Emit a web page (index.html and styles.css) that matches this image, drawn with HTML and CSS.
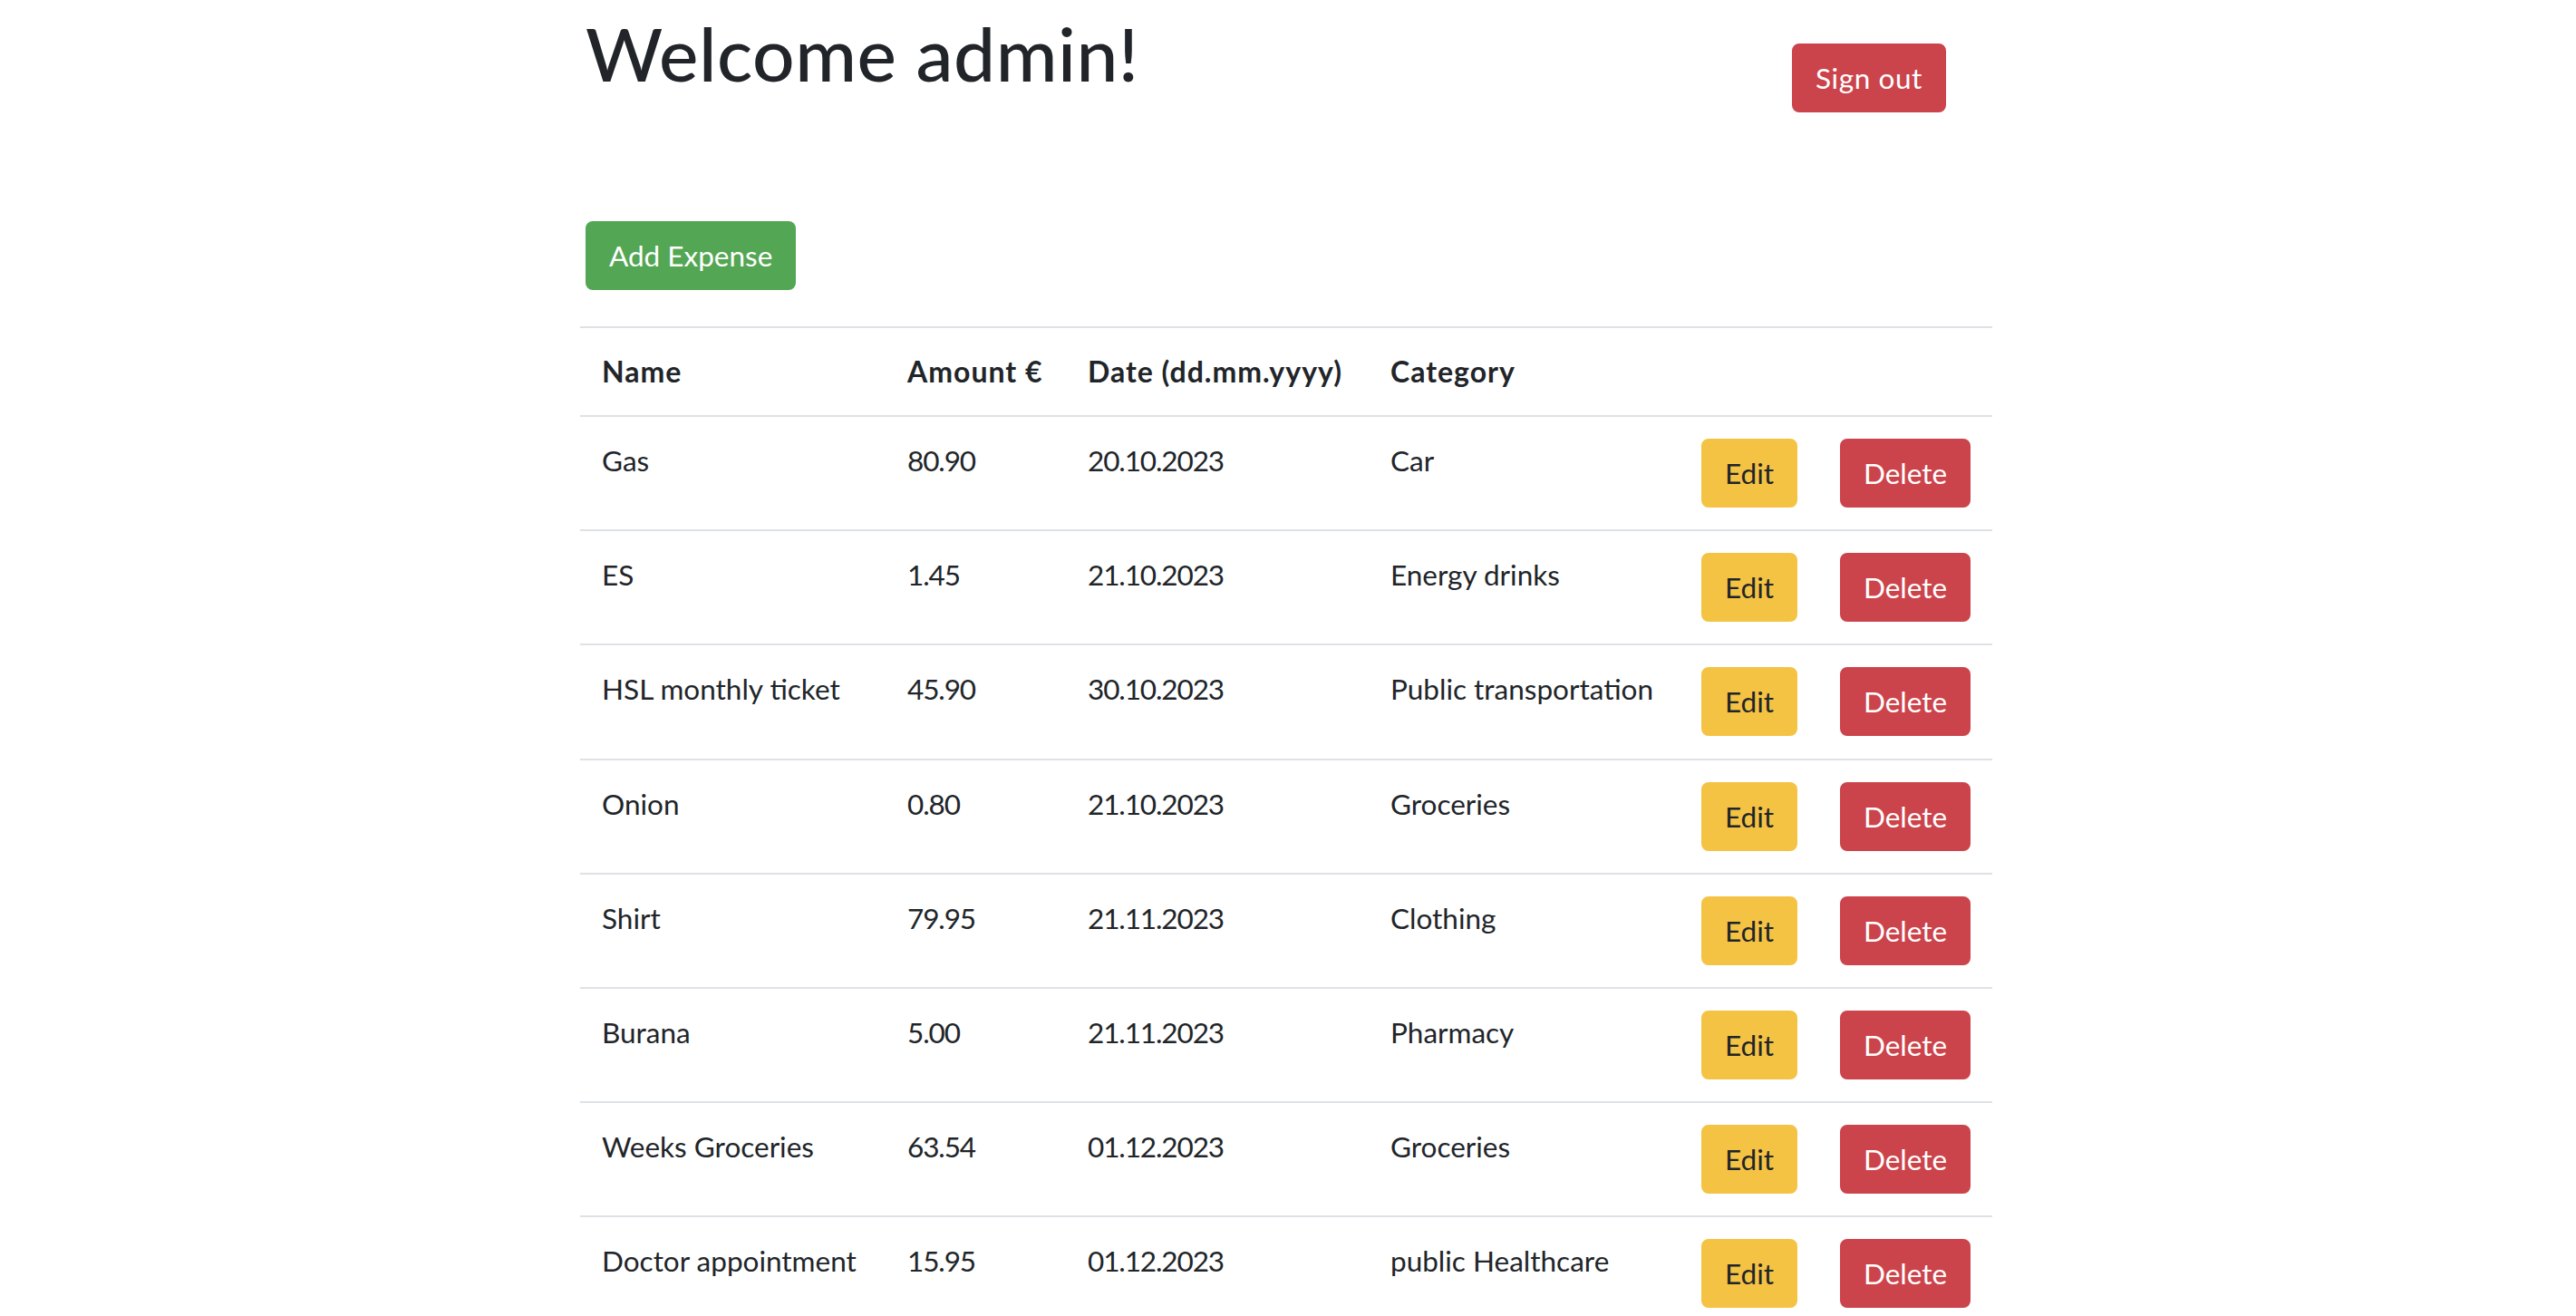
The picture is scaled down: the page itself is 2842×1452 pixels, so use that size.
FILE: index.html
```html
<!DOCTYPE html>
<html lang="en">
<head>
<meta charset="utf-8">
<title>Expenses</title>
<link rel="stylesheet" href="styles.css">
</head>
<body>
<main class="page">
  <header class="top">
    <h1 class="welcome">Welcome admin!</h1>
    <button class="btn btn-danger signout">Sign out</button>
  </header>
  <div class="actions">
    <button class="btn btn-success">Add Expense</button>
  </div>
  <table class="expenses">
    <colgroup>
      <col class="c-name"><col class="c-amount"><col class="c-date"><col class="c-cat"><col class="c-edit"><col class="c-del">
    </colgroup>
    <thead>
      <tr><th>Name</th><th>Amount €</th><th>Date (dd.mm.yyyy)</th><th>Category</th><th></th><th></th></tr>
    </thead>
    <tbody>
      <tr><td>Gas</td><td class="num">80.90</td><td class="num">20.10.2023</td><td>Car</td><td><button class="btn btn-warning">Edit</button></td><td><button class="btn btn-danger">Delete</button></td></tr>
      <tr><td>ES</td><td class="num">1.45</td><td class="num">21.10.2023</td><td>Energy drinks</td><td><button class="btn btn-warning">Edit</button></td><td><button class="btn btn-danger">Delete</button></td></tr>
      <tr><td>HSL monthly ticket</td><td class="num">45.90</td><td class="num">30.10.2023</td><td>Public transportation</td><td><button class="btn btn-warning">Edit</button></td><td><button class="btn btn-danger">Delete</button></td></tr>
      <tr><td>Onion</td><td class="num">0.80</td><td class="num">21.10.2023</td><td>Groceries</td><td><button class="btn btn-warning">Edit</button></td><td><button class="btn btn-danger">Delete</button></td></tr>
      <tr><td>Shirt</td><td class="num">79.95</td><td class="num">21.11.2023</td><td>Clothing</td><td><button class="btn btn-warning">Edit</button></td><td><button class="btn btn-danger">Delete</button></td></tr>
      <tr><td>Burana</td><td class="num">5.00</td><td class="num">21.11.2023</td><td>Pharmacy</td><td><button class="btn btn-warning">Edit</button></td><td><button class="btn btn-danger">Delete</button></td></tr>
      <tr><td>Weeks Groceries</td><td class="num">63.54</td><td class="num">01.12.2023</td><td>Groceries</td><td><button class="btn btn-warning">Edit</button></td><td><button class="btn btn-danger">Delete</button></td></tr>
      <tr><td>Doctor appointment</td><td class="num">15.95</td><td class="num">01.12.2023</td><td>public Healthcare</td><td><button class="btn btn-warning">Edit</button></td><td><button class="btn btn-danger">Delete</button></td></tr>
    </tbody>
  </table>
</main>
</body>
</html>
```
FILE: styles.css
```css
html, body {
  margin: 0;
  padding: 0;
  background: #ffffff;
}

body {
  font-family: Lato, "Open Sans", sans-serif;
  font-size: 31.5px;
  line-height: 48px;
  color: #212529;
}

.page {
  width: 1558px;
  margin-left: calc(50% - 781px);
}

.top {
  display: flex;
  align-items: flex-start;
  padding-left: 6px;
}

.welcome {
  flex: 1;
  margin: 9px 0 0;
  font-size: 82px;
  font-weight: 500;
  line-height: 1.2;
  letter-spacing: 0.5px;
}

.signout {
  margin-top: 48px;
  margin-right: 51px;
  letter-spacing: 0.6px;
}

.actions {
  padding-left: 6px;
  margin-top: 120px;
}

.btn {
  display: inline-block;
  font-family: inherit;
  font-size: 31.5px;
  font-weight: 400;
  line-height: 48px;
  padding: 12px 24px;
  border: 2px solid transparent;
  border-radius: 8px;
  cursor: pointer;
  vertical-align: top;
}

.btn-success {
  background: #53a653;
  border-color: #53a653;
  color: #ffffff;
}

.btn-danger {
  background: #cc444b;
  border-color: #cc444b;
  color: #ffffff;
}

.btn-warning {
  background: #f5c344;
  border-color: #f5c344;
  color: #212529;
}

.expenses {
  width: 1558px;
  margin-top: 40px;
  border-collapse: collapse;
  table-layout: fixed;
}

.c-name { width: 337px; }
.c-amount { width: 199px; }
.c-date { width: 334px; }
.c-cat { width: 343px; }
.c-edit { width: 153px; }
.c-del { width: 192px; }

.expenses th,
.expenses td {
  text-align: left;
  vertical-align: top;
  padding: 24px;
  border-top: 2px solid #dee2e6;
  white-space: nowrap;
}

.expenses th {
  font-size: 32px;
  font-weight: 700;
  letter-spacing: 1px;
  vertical-align: bottom;
}

.expenses td {
  padding-bottom: 24.2px;
}

.expenses td.num {
  letter-spacing: -1.1px;
}
```
